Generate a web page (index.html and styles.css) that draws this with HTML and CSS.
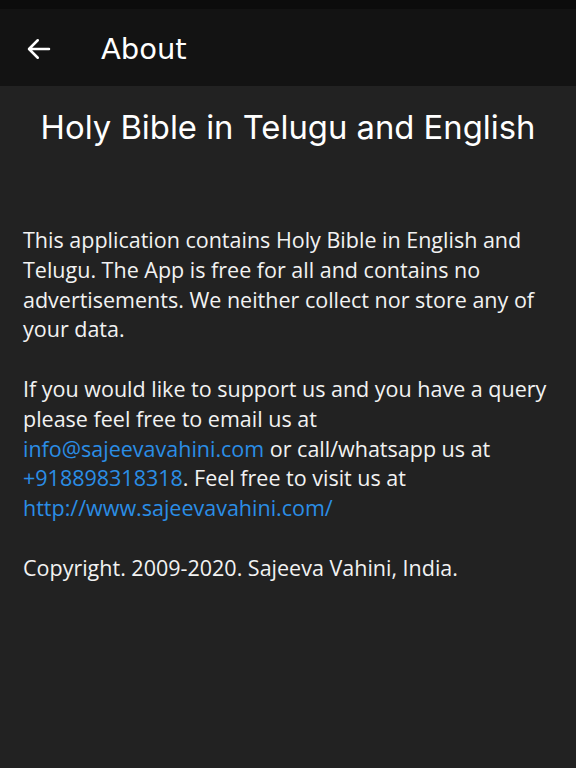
FILE: index.html
```html
<!DOCTYPE html>
<html lang="en">
<head>
  <meta charset="UTF-8" />
  <meta name="viewport" content="width=device-width, initial-scale=1.0"/>
  <title>About</title>
  <link rel="stylesheet" href="styles.css">
</head>
<body>

  <div class="status-bar"></div>

  <div class="toolbar">
    <button class="btn-back" aria-label="Back">
      <svg width="30" height="30" viewBox="0 0 24 24">
        <path d="M20 12H4.5M11 5l-7 7 7 7" fill="none" stroke="#fff" stroke-width="2" stroke-linecap="round" stroke-linejoin="round"/>
      </svg>
    </button>
    <h1 class="toolbar-title">About</h1>
  </div>

  <div class="content">
    <h2 class="app-title">Holy Bible in Telugu and English</h2>

    <p class="about-text">This application contains Holy Bible in English and Telugu. The App is free for all and contains no advertisements. We neither collect nor store any of your data.</p>

    <p class="about-text">If you would like to support us and you have a query please feel free to email us at<br>
      <a href="mailto:info@sajeevavahini.com">info@sajeevavahini.com</a> or call/whatsapp us at<br>
      <a href="tel:+918898318318">+918898318318</a>. Feel free to visit us at<br>
      <a href="http://www.sajeevavahini.com/">http://www.sajeevavahini.com/</a></p>

    <p class="about-text">Copyright. 2009-2020. Sajeeva Vahini, India.</p>
  </div>

</body>
</html>
```

FILE: styles.css
```css
* {
  box-sizing: border-box;
  margin: 0;
  padding: 0;
}

body {
  background-color: #222222;
  color: #f2f2f2;
  font-family: 'Open Sans', sans-serif;
  min-height: 100vh;
}

.status-bar {
  height: 9px;
  background-color: #0c0c0c;
}

.toolbar {
  height: 77px;
  background-color: #131313;
  display: flex;
  align-items: center;
  padding-left: 24px;
  padding-top: 2px;
}

.btn-back {
  background: none;
  border: none;
  display: flex;
  cursor: pointer;
}

.toolbar-title {
  color: #fff;
  font-family: 'DejaVu Sans', sans-serif;
  font-size: 29px;
  font-weight: normal;
  margin-left: 47px;
}

.content {
  padding: 21px 23px;
}

.app-title {
  font-family: 'Inter', sans-serif;
  font-size: 32.8px;
  font-weight: 400;
  text-align: center;
  color: #fff;
  margin-bottom: 78px;
  white-space: nowrap;
}

.about-text {
  font-size: 21.5px;
  line-height: 29.8px;
  margin-bottom: 29.8px;
  max-width: 530px;
}

.about-text a {
  color: #2b8ee6;
  text-decoration: none;
}
```
